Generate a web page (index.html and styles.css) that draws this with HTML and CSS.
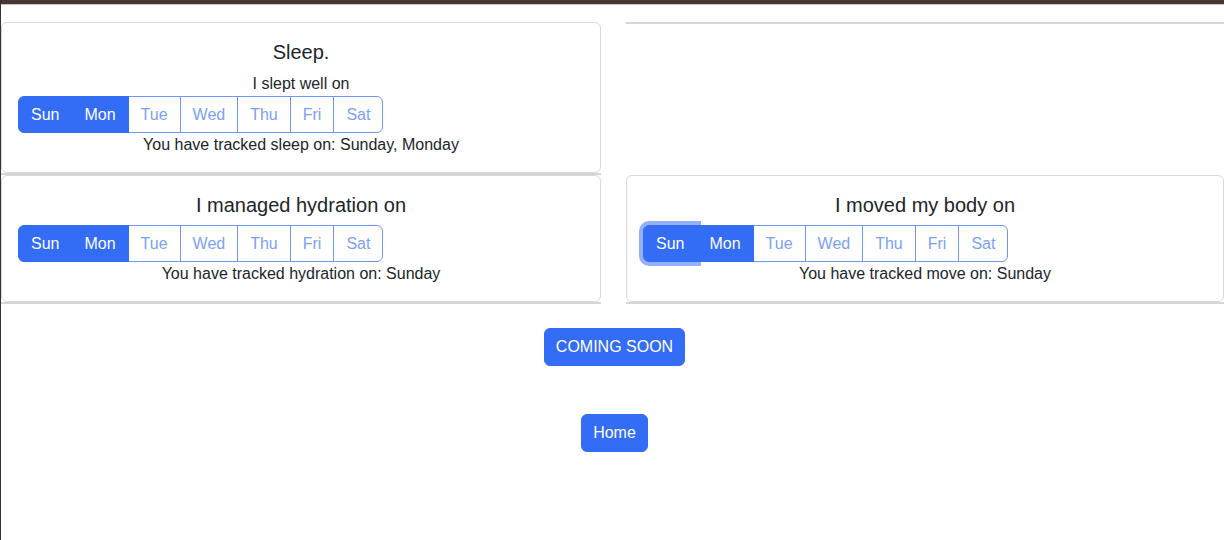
FILE: index.html
```html
<!DOCTYPE html>
<html>
<head>
<meta charset="utf-8">
<link rel="stylesheet" href="styles.css">
</head>
<body>
<div class="topbar"></div>
<main class="page">
  <div class="grid">
    <div class="cell">
      <section class="card">
        <h5 class="title">Sleep.</h5>
        <p class="line">I slept well on</p>
        <div class="group">
          <span class="day on">Sun</span><span class="day on">Mon</span><span class="day">Tue</span><span class="day">Wed</span><span class="day">Thu</span><span class="day">Fri</span><span class="day">Sat</span>
        </div>
        <p class="line">You have tracked sleep on: Sunday, Monday</p>
      </section>
    </div>
    <div class="cell"></div>
    <div class="cell">
      <section class="card">
        <h5 class="title">I managed hydration on</h5>
        <div class="group">
          <span class="day on">Sun</span><span class="day on">Mon</span><span class="day">Tue</span><span class="day">Wed</span><span class="day">Thu</span><span class="day">Fri</span><span class="day">Sat</span>
        </div>
        <p class="line">You have tracked hydration on: Sunday</p>
      </section>
    </div>
    <div class="cell">
      <section class="card">
        <h5 class="title">I moved my body on</h5>
        <div class="group">
          <span class="day on focus">Sun</span><span class="day on">Mon</span><span class="day">Tue</span><span class="day">Wed</span><span class="day">Thu</span><span class="day">Fri</span><span class="day">Sat</span>
        </div>
        <p class="line">You have tracked move on: Sunday</p>
      </section>
    </div>
  </div>
  <div class="actions">
    <button class="btn">COMING SOON</button>
    <button class="btn">Home</button>
  </div>
</main>
</body>
</html>
```
FILE: styles.css
```css
* { box-sizing: border-box; }
html, body { margin: 0; padding: 0; }
body {
  font-family: "Liberation Sans", Arial, sans-serif;
  font-size: 16px;
  line-height: 24px;
  color: #212529;
  background: #fff;
  border-left: 1px solid #3a3030;
  min-height: 540px;
}
.topbar {
  height: 5px;
  background: #4a3434;
  border-bottom: 1px solid #c8c4c4;
}
.page { padding-top: 17px; }
.grid {
  display: grid;
  grid-template-columns: 600px 598px;
  column-gap: 25px;
  align-items: start;
}
.cell {
  border-bottom: 2px solid #d6d6d6;
}
.card {
  border: 1px solid #d9d9d9;
  border-radius: 6px;
  padding: 17px 16px 15px;
  text-align: center;
  background: #fff;
}
.title {
  margin: 0 0 8px;
  font-size: 20px;
  line-height: 24px;
  font-weight: 500;
}
.line { margin: 0; }
.group {
  display: flex;
  width: max-content;
  border-radius: 6px;
  position: relative;
}
.day {
  display: block;
  padding: 6px 12px;
  line-height: 23px;
  border: 1px solid #6f95f7;
  margin-left: -1px;
  color: #7c9ff8;
  background: #fff;
  position: relative;
}
.day:first-child { margin-left: 0; border-radius: 6px 0 0 6px; }
.day:last-child { border-radius: 0 6px 6px 0; }
.day.on {
  background: #336cf5;
  border-color: #336cf5;
  color: #fff;
  z-index: 2;
}
.day.focus {
  z-index: 1;
  box-shadow: 0 0 0 4px #93b1f9;
}
.actions {
  display: flex;
  flex-direction: column;
  align-items: center;
  padding-left: 4px;
  padding-top: 24px;
  gap: 48px;
}
.btn {
  font-family: "Liberation Sans", Arial, sans-serif;
  font-size: 16px;
  line-height: 24px;
  padding: 6px 11px;
  border: 1px solid #336cf5;
  background: #336cf5;
  color: #fff;
  border-radius: 6px;
}
```
